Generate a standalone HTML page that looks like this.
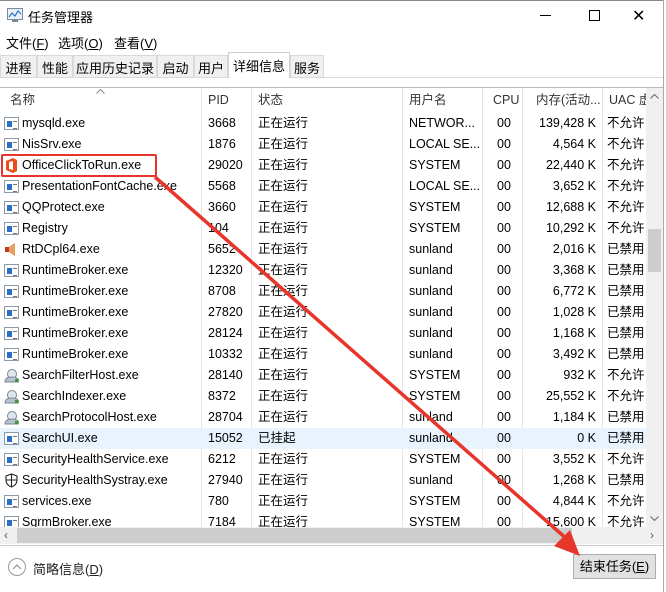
<!DOCTYPE html>
<html><head><meta charset="utf-8"><style>
*{margin:0;padding:0;box-sizing:border-box}
body{width:666px;height:592px;background:#fff;font-family:"Liberation Sans","Noto Sans CJK SC",sans-serif;font-size:13px;color:#000;position:relative;overflow:hidden}
.a{position:absolute;white-space:nowrap}
.tab{position:absolute;top:55px;height:22px;background:#f0f0f0;border:1px solid #d9d9d9;border-bottom:none;padding-top:2px;font-size:13px;white-space:nowrap;text-align:center;overflow:visible}
.hdr{position:absolute;top:88px;height:24px;line-height:24px;font-size:12.5px;color:#333}
.vl{position:absolute;top:88px;height:439px;width:1px;background:#e5e5e5}
.r{position:absolute;left:0;width:646px;height:21px;line-height:21px;font-size:12.5px}
.r span{position:absolute;top:0}
.c1{left:22px}.c2{left:208px}.c3{left:258px}.c4{left:409px}.c5{left:497px}.c6{right:50px;text-align:right}.c7{left:607px}
.ic{position:absolute;left:4px;top:4px;width:15px;height:13px;border:1px solid #8a9aa8;background:#fff}
.ic:after{content:"";position:absolute;left:2px;top:3px;width:5px;height:6px;background:#2a6fc4}
.ic:before{content:"";position:absolute;left:8px;top:3px;width:4px;height:6px;border-top:1px solid #777;border-bottom:1px solid #777}
</style></head><body>
<div class="a" style="left:0;top:0;width:666px;height:1px;background:#888"></div>
<svg class="a" style="left:7px;top:8px" width="16" height="14"><rect x="0.5" y="0.5" width="15" height="11" fill="#e8f0f8" stroke="#7a8a9a"/><polyline points="2,9 5,5 8,8 11,3 14,6" fill="none" stroke="#2a6fc4" stroke-width="1.2"/><rect x="5" y="12" width="6" height="2" fill="#7a8a9a"/></svg>
<div class="a" style="left:28px;top:7px;font-size:13px">任务管理器</div>
<div class="a" style="left:540px;top:15px;width:11px;height:1px;background:#000"></div>
<div class="a" style="left:589px;top:10px;width:11px;height:11px;border:1px solid #000"></div>
<div class="a" style="left:632px;top:6px;font-size:16px;font-weight:100">✕</div>
<div class="a" style="left:6px;top:33px;font-size:13px">文件(<u>F</u>)</div>
<div class="a" style="left:58px;top:33px;font-size:13px">选项(<u>O</u>)</div>
<div class="a" style="left:114px;top:33px;font-size:13px">查看(<u>V</u>)</div>
<div class="tab" style="left:0;width:37px">进程</div>
<div class="tab" style="left:37px;width:36px">性能</div>
<div class="tab" style="left:73px;width:84px">应用历史记录</div>
<div class="tab" style="left:157px;width:37px">启动</div>
<div class="tab" style="left:194px;width:34px">用户</div>
<div class="tab" style="left:228px;top:52px;height:26px;width:62px;background:#fff;z-index:2;border-color:#d0d0d0;padding-top:3px">详细信息</div>
<div class="tab" style="left:290px;width:34px">服务</div>
<div class="a" style="left:0;top:77px;width:666px;height:1px;background:#d9d9d9"></div>
<div class="a" style="left:0;top:87px;width:666px;height:1px;background:#bbb"></div>
<svg class="a" style="left:96px;top:89px" width="9" height="5"><polyline points="0.5,4.5 4.5,0.5 8.5,4.5" fill="none" stroke="#888"/></svg>
<div class="hdr" style="left:10px">名称</div>
<div class="hdr" style="left:208px">PID</div>
<div class="hdr" style="left:258px">状态</div>
<div class="hdr" style="left:409px">用户名</div>
<div class="hdr" style="left:493px">CPU</div>
<div class="hdr" style="left:536px">内存(活动...</div>
<div class="hdr" style="left:609px">UAC 虚</div>
<div class="vl" style="left:201px"></div><div class="vl" style="left:251px"></div><div class="vl" style="left:402px"></div><div class="vl" style="left:482px"></div><div class="vl" style="left:522px"></div><div class="vl" style="left:602px"></div>

<div class="r" style="top:113px"><i class="ic"></i><span class="c1">mysqld.exe</span><span class="c2">3668</span><span class="c3">正在运行</span><span class="c4">NETWOR...</span><span class="c5">00</span><span class="c6">139,428 K</span><span class="c7">不允许</span></div>
<div class="r" style="top:134px"><i class="ic"></i><span class="c1">NisSrv.exe</span><span class="c2">1876</span><span class="c3">正在运行</span><span class="c4">LOCAL SE...</span><span class="c5">00</span><span class="c6">4,564 K</span><span class="c7">不允许</span></div>
<div class="r" style="top:155px"><svg style="position:absolute;left:4px;top:3px" width="14" height="15"><path d="M2 3 L9 0 L13 2 L13 13 L9 15 L2 12 Z" fill="#e94e1b"/><path d="M5 4 L9 3 L9 12 L5 11 Z" fill="#fff"/></svg><span class="c1">OfficeClickToRun.exe</span><span class="c2">29020</span><span class="c3">正在运行</span><span class="c4">SYSTEM</span><span class="c5">00</span><span class="c6">22,440 K</span><span class="c7">不允许</span></div>
<div class="r" style="top:176px"><i class="ic"></i><span class="c1">PresentationFontCache.exe</span><span class="c2">5568</span><span class="c3">正在运行</span><span class="c4">LOCAL SE...</span><span class="c5">00</span><span class="c6">3,652 K</span><span class="c7">不允许</span></div>
<div class="r" style="top:197px"><i class="ic"></i><span class="c1">QQProtect.exe</span><span class="c2">3660</span><span class="c3">正在运行</span><span class="c4">SYSTEM</span><span class="c5">00</span><span class="c6">12,688 K</span><span class="c7">不允许</span></div>
<div class="r" style="top:218px"><i class="ic"></i><span class="c1">Registry</span><span class="c2">104</span><span class="c3">正在运行</span><span class="c4">SYSTEM</span><span class="c5">00</span><span class="c6">10,292 K</span><span class="c7">不允许</span></div>
<div class="r" style="top:239px"><svg style="position:absolute;left:4px;top:3px" width="14" height="15"><path d="M1 5 H5 L11 1 V14 L5 10 H1 Z" fill="#c0392b"/><path d="M5 5 L11 1 V14 L5 10 Z" fill="#e8a060"/></svg><span class="c1">RtDCpl64.exe</span><span class="c2">5652</span><span class="c3">正在运行</span><span class="c4">sunland</span><span class="c5">00</span><span class="c6">2,016 K</span><span class="c7">已禁用</span></div>
<div class="r" style="top:260px"><i class="ic"></i><span class="c1">RuntimeBroker.exe</span><span class="c2">12320</span><span class="c3">正在运行</span><span class="c4">sunland</span><span class="c5">00</span><span class="c6">3,368 K</span><span class="c7">已禁用</span></div>
<div class="r" style="top:281px"><i class="ic"></i><span class="c1">RuntimeBroker.exe</span><span class="c2">8708</span><span class="c3">正在运行</span><span class="c4">sunland</span><span class="c5">00</span><span class="c6">6,772 K</span><span class="c7">已禁用</span></div>
<div class="r" style="top:302px"><i class="ic"></i><span class="c1">RuntimeBroker.exe</span><span class="c2">27820</span><span class="c3">正在运行</span><span class="c4">sunland</span><span class="c5">00</span><span class="c6">1,028 K</span><span class="c7">已禁用</span></div>
<div class="r" style="top:323px"><i class="ic"></i><span class="c1">RuntimeBroker.exe</span><span class="c2">28124</span><span class="c3">正在运行</span><span class="c4">sunland</span><span class="c5">00</span><span class="c6">1,168 K</span><span class="c7">已禁用</span></div>
<div class="r" style="top:344px"><i class="ic"></i><span class="c1">RuntimeBroker.exe</span><span class="c2">10332</span><span class="c3">正在运行</span><span class="c4">sunland</span><span class="c5">00</span><span class="c6">3,492 K</span><span class="c7">已禁用</span></div>
<div class="r" style="top:365px"><svg style="position:absolute;left:4px;top:3px" width="15" height="15"><circle cx="8" cy="6" r="4.5" fill="#dfe6ee" stroke="#7a8796"/><path d="M1 14 Q1 9 8 9 Q15 9 15 14 Z" fill="#b8c2cc" stroke="#7a8796"/><rect x="11" y="11" width="3" height="3" fill="#3a9a3a"/></svg><span class="c1">SearchFilterHost.exe</span><span class="c2">28140</span><span class="c3">正在运行</span><span class="c4">SYSTEM</span><span class="c5">00</span><span class="c6">932 K</span><span class="c7">不允许</span></div>
<div class="r" style="top:386px"><svg style="position:absolute;left:4px;top:3px" width="15" height="15"><circle cx="8" cy="6" r="4.5" fill="#dfe6ee" stroke="#7a8796"/><path d="M1 14 Q1 9 8 9 Q15 9 15 14 Z" fill="#b8c2cc" stroke="#7a8796"/><rect x="11" y="11" width="3" height="3" fill="#3a9a3a"/></svg><span class="c1">SearchIndexer.exe</span><span class="c2">8372</span><span class="c3">正在运行</span><span class="c4">SYSTEM</span><span class="c5">00</span><span class="c6">25,552 K</span><span class="c7">不允许</span></div>
<div class="r" style="top:407px"><svg style="position:absolute;left:4px;top:3px" width="15" height="15"><circle cx="8" cy="6" r="4.5" fill="#dfe6ee" stroke="#7a8796"/><path d="M1 14 Q1 9 8 9 Q15 9 15 14 Z" fill="#b8c2cc" stroke="#7a8796"/><rect x="11" y="11" width="3" height="3" fill="#3a9a3a"/></svg><span class="c1">SearchProtocolHost.exe</span><span class="c2">28704</span><span class="c3">正在运行</span><span class="c4">sunland</span><span class="c5">00</span><span class="c6">1,184 K</span><span class="c7">已禁用</span></div>
<div class="r" style="top:428px;background:#e8f3fd"><i class="ic"></i><span class="c1">SearchUI.exe</span><span class="c2">15052</span><span class="c3">已挂起</span><span class="c4">sunland</span><span class="c5">00</span><span class="c6">0 K</span><span class="c7">已禁用</span></div>
<div class="r" style="top:449px"><i class="ic"></i><span class="c1">SecurityHealthService.exe</span><span class="c2">6212</span><span class="c3">正在运行</span><span class="c4">SYSTEM</span><span class="c5">00</span><span class="c6">3,552 K</span><span class="c7">不允许</span></div>
<div class="r" style="top:470px"><svg style="position:absolute;left:4px;top:3px" width="15" height="15"><path d="M7.5 1 L13 3 V7 Q13 12 7.5 14 Q2 12 2 7 V3 Z M7.5 1 V14 M2 7 H13" fill="none" stroke="#222" stroke-width="1.1"/></svg><span class="c1">SecurityHealthSystray.exe</span><span class="c2">27940</span><span class="c3">正在运行</span><span class="c4">sunland</span><span class="c5">00</span><span class="c6">1,268 K</span><span class="c7">已禁用</span></div>
<div class="r" style="top:491px"><i class="ic"></i><span class="c1">services.exe</span><span class="c2">780</span><span class="c3">正在运行</span><span class="c4">SYSTEM</span><span class="c5">00</span><span class="c6">4,844 K</span><span class="c7">不允许</span></div>
<div class="r" style="top:512px;height:15px;overflow:hidden"><i class="ic"></i><span class="c1">SgrmBroker.exe</span><span class="c2">7184</span><span class="c3">正在运行</span><span class="c4">SYSTEM</span><span class="c5">00</span><span class="c6">15,600 K</span><span class="c7">不允许</span></div>

<div class="a" style="left:646px;top:88px;width:17px;height:439px;background:#f0f0f0"></div>
<svg class="a" style="left:650px;top:94px" width="9" height="5"><polyline points="0.5,4.5 4.5,0.5 8.5,4.5" fill="none" stroke="#666"/></svg>
<div class="a" style="left:648px;top:229px;width:13px;height:43px;background:#cdcdcd"></div>
<svg class="a" style="left:650px;top:516px" width="9" height="5"><polyline points="0.5,0.5 4.5,4.5 8.5,0.5" fill="none" stroke="#666"/></svg>
<div class="a" style="left:0;top:527px;width:663px;height:17px;background:#f0f0f0"></div>
<div class="a" style="left:17px;top:528px;width:555px;height:15px;background:#cdcdcd"></div>
<div class="a" style="left:4px;top:528px;font-size:12px;color:#555">‹</div>
<div class="a" style="left:650px;top:528px;font-size:12px;color:#555">›</div>
<div class="a" style="left:663px;top:0;width:3px;height:592px;background:#fff;border-left:1px solid #aaa"></div>
<div class="a" style="left:0;top:545px;width:663px;height:1px;background:#ccc"></div>
<div class="a" style="left:8px;top:558px;width:18px;height:18px;border:1px solid #999;border-radius:50%"></div>
<svg class="a" style="left:12px;top:563px" width="10" height="7"><polyline points="1,6 5,2 9,6" fill="none" stroke="#888"/></svg>
<div class="a" style="left:33px;top:559px;font-size:13px;color:#222">简略信息(<u>D</u>)</div>
<div class="a" style="left:573px;top:554px;width:83px;height:25px;background:#e1e1e1;border:1px solid #adadad;font-size:13px;text-align:center;line-height:23px">结束任务(<u>E</u>)</div>

<div class="a" style="left:1px;top:154px;width:156px;height:23px;border:2px solid #e8352a;border-radius:2px"></div>
<svg class="a" style="left:0;top:0" width="666" height="592"><line x1="155" y1="177" x2="568" y2="540" stroke="#e8352a" stroke-width="3.5"/><polygon points="580,556 554,546 570,530" fill="#e8352a"/></svg>
</body></html>
